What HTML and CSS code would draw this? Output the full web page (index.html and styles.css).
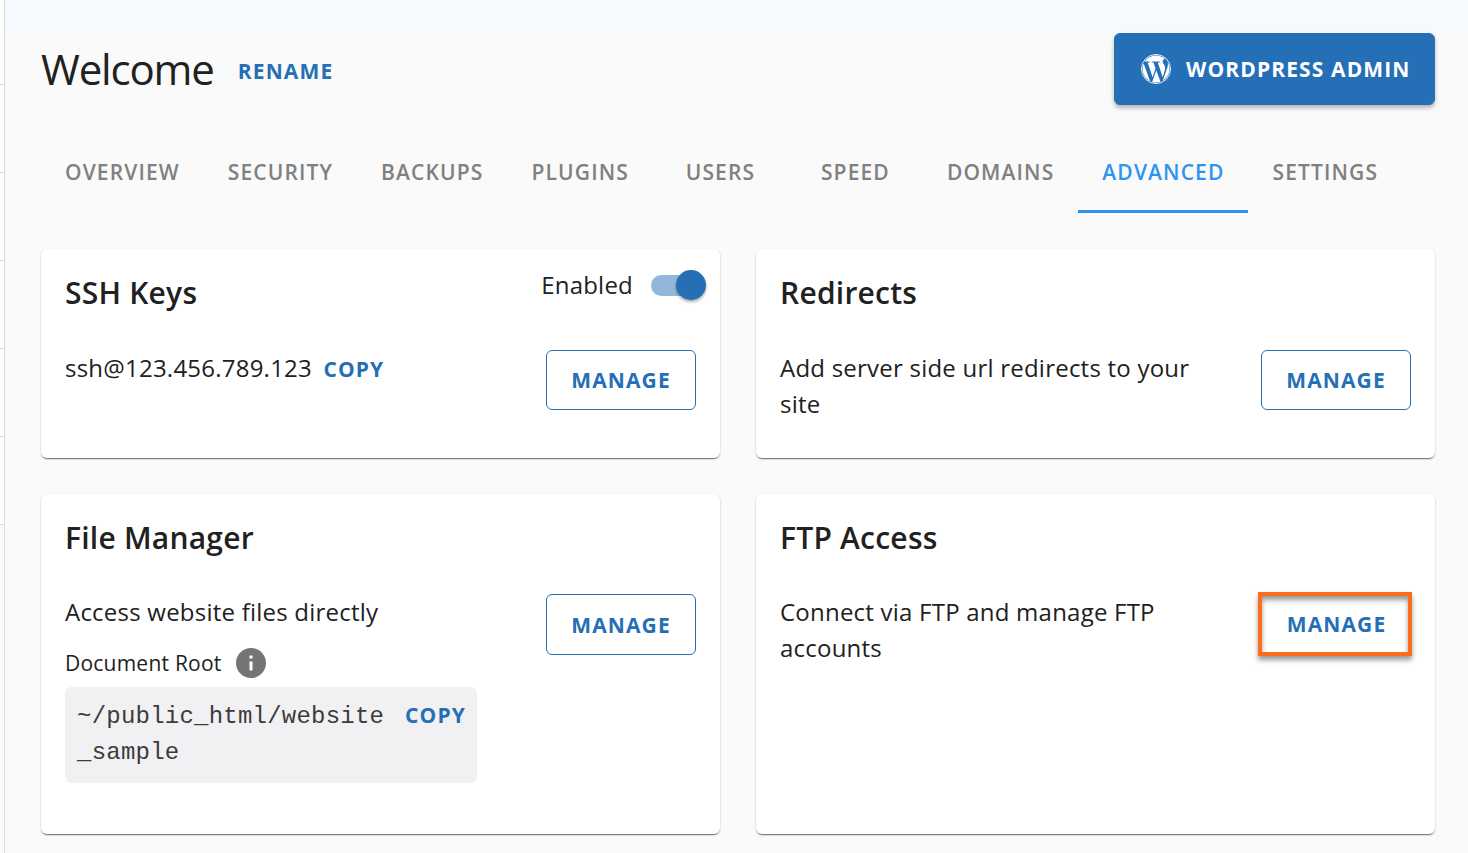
FILE: index.html
```html
<!DOCTYPE html>
<html lang="en">
  <head>
    <title>Welcome</title>
    <meta charset="utf-8">
    <meta name="viewport" content="width=device-width, initial-scale=1.0">
    <link rel="stylesheet" href="styles.css">
  </head>

  <body>
    <aside class="sidebar"></aside>

    <main class="main">
      <header class="header">
        <h1>Welcome</h1>
        <a class="link link--rename" href="#">RENAME</a>
        <button class="button button--primary">
          <svg class="button__icon" viewBox="0 0 24 24">
            <circle cx="12" cy="12" r="11.65" fill="none" stroke="currentColor" stroke-width=".7"/>
            <path fill="currentColor" d="M21.469 6.825c.84 1.537 1.318 3.3 1.318 5.175 0 3.979-2.156 7.456-5.363 9.325l3.295-9.527c.615-1.54.82-2.771.82-3.864 0-.405-.026-.78-.07-1.11m-7.981.105c.647-.03 1.232-.105 1.232-.105.582-.075.514-.93-.067-.899 0 0-1.755.135-2.88.135-1.064 0-2.85-.15-2.85-.15-.585-.03-.661.855-.075.885 0 0 .54.061 1.125.09l1.68 4.605-2.37 7.08L5.354 6.9c.649-.03 1.234-.1 1.234-.1.585-.075.516-.93-.065-.896 0 0-1.746.138-2.874.138-.2 0-.438-.008-.69-.015C4.911 3.15 8.235 1.215 12 1.215c2.809 0 5.365 1.072 7.286 2.833-.046-.003-.091-.009-.141-.009-1.06 0-1.812.923-1.812 1.914 0 .89.513 1.643 1.06 2.531.411.72.89 1.643.89 2.977 0 .915-.354 1.994-.821 3.479l-1.075 3.585-3.9-11.61zM12 22.784c-1.059 0-2.081-.153-3.048-.437l3.237-9.406 3.315 9.087c.024.053.05.101.078.149-1.12.393-2.325.609-3.582.609M1.211 12c0-1.564.336-3.05.935-4.39L7.29 21.709C3.694 19.96 1.212 16.271 1.211 12"/>
          </svg>
          <span>WORDPRESS ADMIN</span>
        </button>
      </header>

      <nav class="tabs">
        <a class="tab" href="#">OVERVIEW</a>
        <a class="tab" href="#">SECURITY</a>
        <a class="tab" href="#">BACKUPS</a>
        <a class="tab" href="#">PLUGINS</a>
        <a class="tab" href="#">USERS</a>
        <a class="tab" href="#">SPEED</a>
        <a class="tab" href="#">DOMAINS</a>
        <a class="tab tab--active" href="#">ADVANCED</a>
        <a class="tab" href="#">SETTINGS</a>
      </nav>

      <div class="cards">
        <section class="card">
          <div class="card__head">
            <h2>SSH Keys</h2>
            <div class="toggle">
              <span>Enabled</span>
              <span class="switch"><span class="switch__thumb"></span></span>
            </div>
          </div>
          <div class="card__body">
            <p class="card__text">ssh@123.456.789.123 <a class="link link--copy" href="#">COPY</a></p>
            <button class="button">MANAGE</button>
          </div>
        </section>

        <section class="card">
          <div class="card__head">
            <h2>Redirects</h2>
          </div>
          <div class="card__body">
            <p class="card__text">Add server side url redirects to your site</p>
            <button class="button">MANAGE</button>
          </div>
        </section>

        <section class="card card--tall">
          <div class="card__head">
            <h2>File Manager</h2>
          </div>
          <div class="card__body">
            <div class="card__text">
              <p>Access website files directly</p>
              <div class="root">
                <span>Document Root</span>
                <svg class="root__icon" viewBox="2 2 20 20">
                  <path fill="#757575" d="M12 2C6.480 2 2 6.480 2 12s4.480 10 10 10 10-4.480 10-10S17.520 2 12 2zm1 15h-2v-6h2v6zm0-8h-2V7h2v2z"/>
                </svg>
              </div>
              <div class="path">
                <code>~/public_html/website<br>_sample</code>
                <a class="link" href="#">COPY</a>
              </div>
            </div>
            <button class="button">MANAGE</button>
          </div>
        </section>

        <section class="card card--tall">
          <div class="card__head">
            <h2>FTP Access</h2>
          </div>
          <div class="card__body">
            <p class="card__text">Connect via FTP and manage FTP accounts</p>
            <button class="button button--marked">MANAGE</button>
          </div>
        </section>
      </div>
    </main>
  </body>
</html>
```

FILE: styles.css
```css
:root {
  --blue: #246fb5;
  --active: #2f93f0;
  --text: #212121;
}

* {
  box-sizing: border-box;
}

html, body {
  margin: 0;
  padding: 0;
}

body {
  display: flex;
  height: 853px;
  overflow: hidden;
  background-color: #fafafa;
  color: var(--text);
  font-family: "Open Sans", "Noto Sans", sans-serif;
  font-size: 24px;
  line-height: 36px;
  letter-spacing: 0.225px;
}

h1, h2, p {
  margin: 0;
}

a {
  text-decoration: none;
}

.sidebar {
  flex: none;
  width: 5px;
  border-right: 1px solid #dcdcdc;
  background: repeating-linear-gradient(#fff 0 87px, #dcdcdc 87px 88px) 0 -3px / 100% 528px no-repeat #fafafa;
}

.main {
  flex: 1;
  padding: 33px 33px 0 36px;
  background: linear-gradient(#f5fafe 33px, #fafafa 33px);
}

.header {
  display: flex;
  align-items: center;
  height: 72px;
}

h1 {
  font-size: 42px;
  font-weight: 400;
  letter-spacing: -1.15px;
}

.link {
  color: var(--blue);
  font-size: 21px;
  font-weight: 700;
  letter-spacing: 1.125px;
}

.link--rename {
  margin-left: 24px;
  padding-top: 4px;
}

.link--copy {
  margin-left: 5px;
}

.button {
  flex: none;
  width: 150px;
  height: 60px;
  padding: 0;
  border: 1px solid var(--blue);
  border-radius: 6px;
  background: none;
  color: var(--blue);
  font: 700 21px "Open Sans", "Noto Sans", sans-serif;
  letter-spacing: 1.125px;
  white-space: nowrap;
}

.button--primary {
  display: flex;
  align-items: center;
  gap: 15px;
  width: 321px;
  height: 72px;
  margin-left: auto;
  padding: 0 0 0 26px;
  background-color: var(--blue);
  color: white;
  box-shadow: 0 3px 4px rgba(0, 0, 0, .28);
}

.button__icon {
  flex: none;
  width: 30px;
  height: 30px;
}

.card--tall .button {
  height: 61px;
}

.card--tall .button--marked {
  width: 154px;
  height: 64px;
  margin: -2px -1px 0 0;
  padding-left: 3px;
  border: 4px solid #ff6d1a;
  border-radius: 0;
  box-shadow: 0 4px 5px rgba(0, 0, 0, .4), inset 0 4px 5px rgba(0, 0, 0, .4);
}

.tabs {
  display: flex;
  height: 72px;
  margin-top: 36px;
}

.tab {
  display: flex;
  align-items: center;
  justify-content: center;
  min-width: 135px;
  padding: 0 24px 7px;
  border-bottom: 3px solid transparent;
  color: #808080;
  font-size: 21px;
  font-weight: 600;
  letter-spacing: 1.125px;
}

.tab--active {
  border-color: var(--active);
  color: var(--active);
}

.cards {
  display: grid;
  grid-template-columns: 1fr 1fr;
  grid-template-rows: 209px 340px;
  gap: 36px;
  margin-top: 36px;
}

.card {
  padding: 23px 24px;
  border-radius: 6px;
  background-color: white;
  box-shadow: 0 2px 1px -1px rgba(0, 0, 0, .4), 0 1px 2px rgba(0, 0, 0, .28);
}

.card__head {
  display: flex;
  justify-content: space-between;
  height: 78px;
}

.card--tall .card__head {
  height: 77px;
}

h2 {
  font-size: 30px;
  font-weight: 600;
  line-height: 42px;
}

.toggle {
  display: flex;
  align-items: center;
  gap: 18px;
  height: 36px;
  margin: -5px -9px 0 0;
}

.switch {
  width: 54px;
  height: 21px;
  border-radius: 11px;
  background-color: #92b7da;
}

.switch__thumb {
  display: block;
  width: 30px;
  height: 30px;
  margin: -5px 0 0 25px;
  border-radius: 50%;
  background-color: var(--blue);
  box-shadow: 0 2px 3px rgba(0, 0, 0, .35);
}

.card__body {
  display: flex;
  align-items: flex-start;
  justify-content: space-between;
}

.card__text {
  width: 412px;
}

.root {
  display: flex;
  align-items: center;
  gap: 14px;
  height: 36px;
  margin: 15px 0 6px;
  font-size: 21px;
}

.root__icon {
  width: 30px;
  height: 30px;
}

.path {
  display: flex;
  justify-content: space-between;
  height: 96px;
  padding: 10px 11px 0 12px;
  border-radius: 6px;
  background-color: #f1f1f4;
}

code {
  padding-top: 2px;
  color: #3c3c3c;
  font-family: "Courier New", "Liberation Mono", monospace;
  font-size: 24px;
}
```
